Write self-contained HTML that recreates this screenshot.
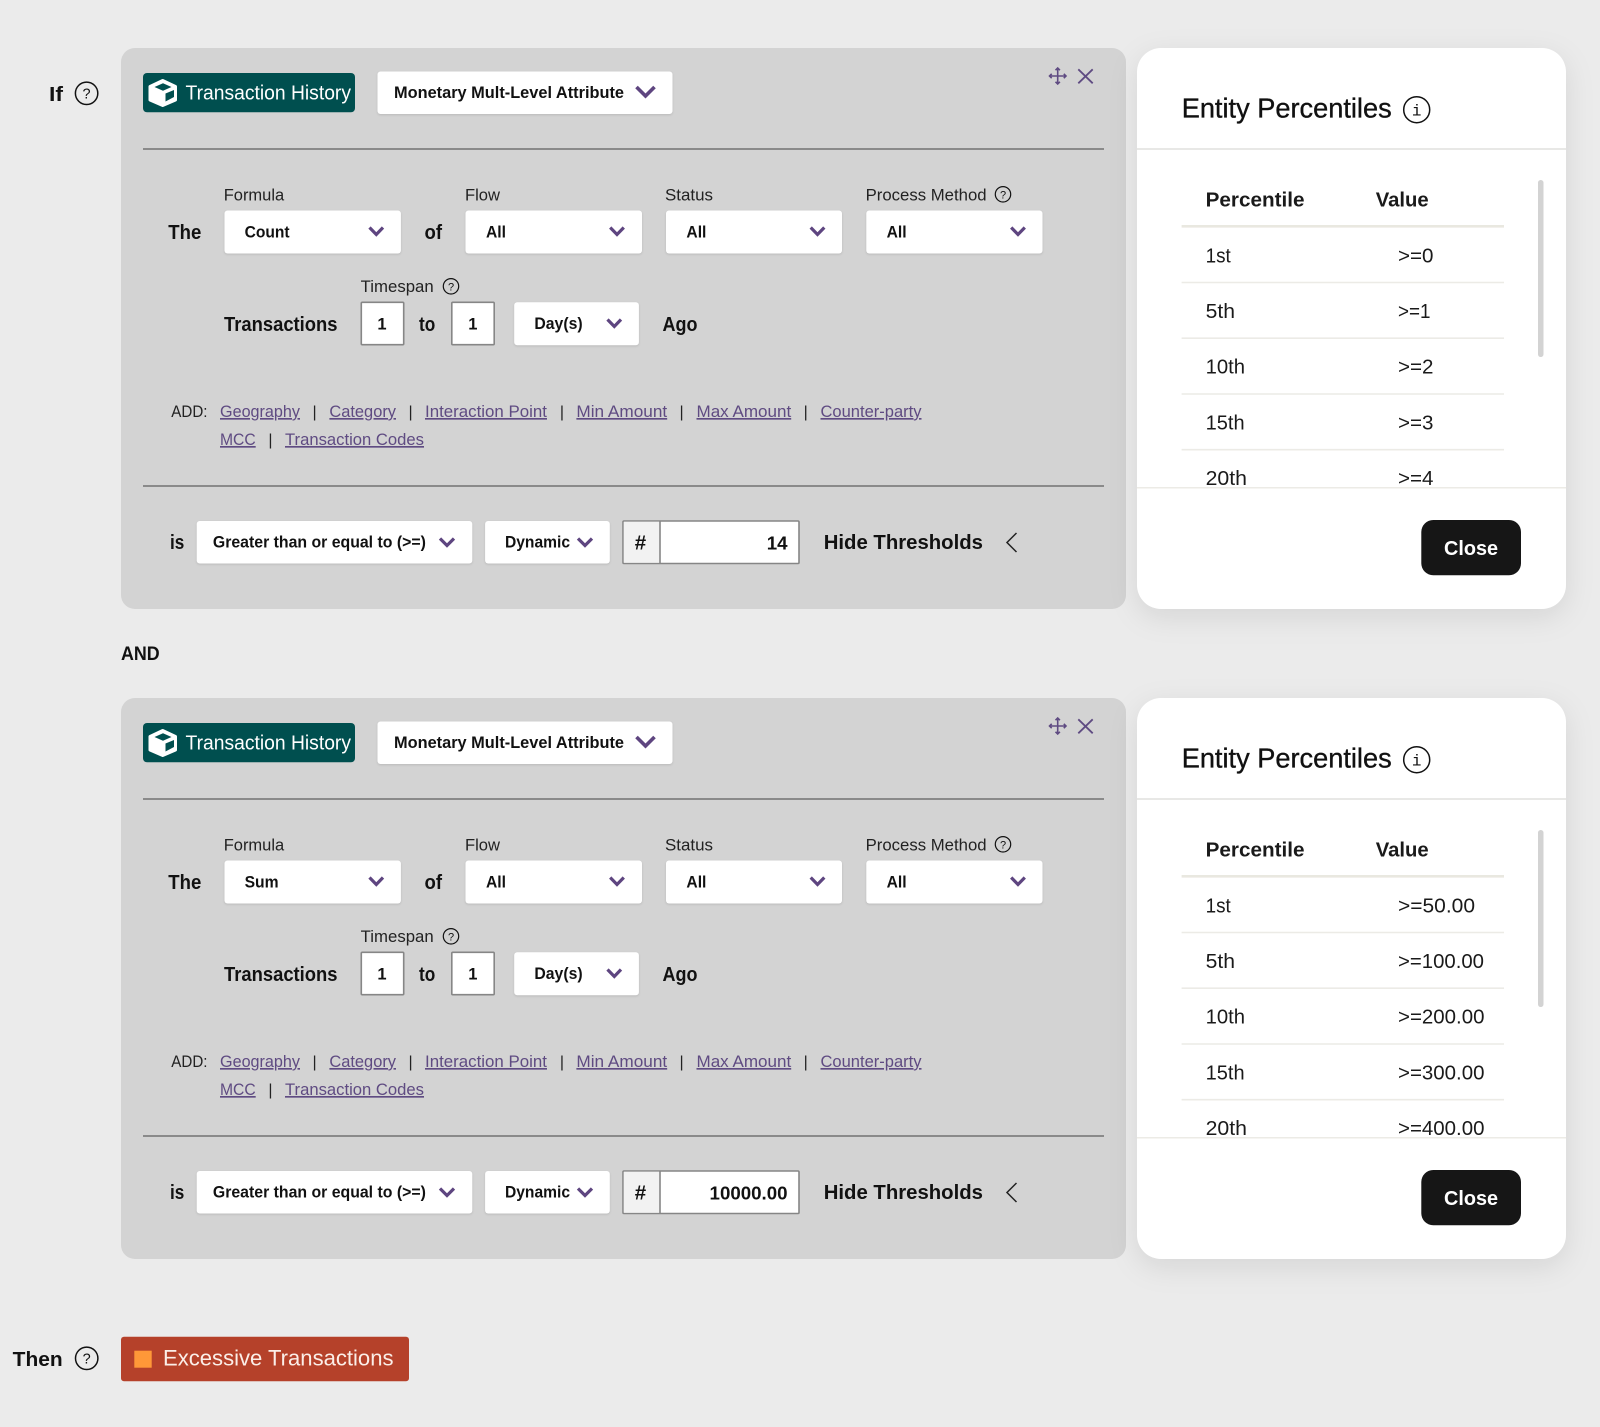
<!DOCTYPE html>
<html lang="en">
<head>
<meta charset="utf-8">
<title>Rule Builder</title>
<style>
html,body{margin:0;padding:0;background:#ebebeb;}
svg{display:block;}
text{font-family:"Liberation Sans",sans-serif;fill:#111;}
.b20{font-size:20.5px;font-weight:700;}
.b16{font-size:16.5px;font-weight:700;}
.r16{font-size:16.5px;fill:#222;}
.lnk{font-size:16.5px;fill:#5f4b82;text-decoration:underline;}
.sep{font-size:16px;fill:#222;}
.th{font-size:20.5px;font-weight:700;fill:#1a1a1a;}
.td{font-size:20.5px;fill:#1a1a1a;}
.dd{fill:#fff;filter:drop-shadow(0 1px 1px rgba(0,0,0,.12));}
.chev{fill:none;stroke:#5e4580;stroke-width:3.2;}
.hr{stroke:#8a8a8a;stroke-width:2;}
.rl{stroke:#ecebe6;stroke-width:1.6;}
.q{fill:none;stroke:#111;stroke-width:1.5;}
.side{fill:#fff;filter:drop-shadow(0 8px 14px rgba(0,0,0,.09));}
.inp{fill:#fff;stroke:#868686;stroke-width:1.6;}
.ttl{font-size:28px;fill:#111;stroke:#111;stroke-width:.35;}
</style>
</head>
<body>
<svg xmlns="http://www.w3.org/2000/svg" width="1600" height="1427" viewBox="0 0 1600 1427">
<rect width="1600" height="1427" fill="#ebebeb"/>

<text class="b20" x="49" y="101" textLength="14" lengthAdjust="spacingAndGlyphs">If</text>
<circle class="q" cx="86.6" cy="93.3" r="11.2"/>
<text x="86.6" y="98.7" text-anchor="middle" style="font-size:14.5px">?</text>

<g>
<rect x="121" y="48" width="1005" height="561" rx="14" fill="#d3d3d3"/>
<rect x="143" y="73" width="212" height="39.3" rx="4" fill="#004f4f"/>
<path d="M162.7 80.5L175.5 86.5V100L162.7 105.5L150 100V86.5Z" fill="#fff" stroke="#fff" stroke-width="3" stroke-linejoin="round"/>
<path d="M154.5 87L163 83.2L171.5 87L163 90.8Z" fill="#004f4f"/>
<path d="M165.5 93.5L174 90V97L165.5 101.5Z" fill="#004f4f"/>
<text x="185.5" y="99.5" textLength="165.5" lengthAdjust="spacingAndGlyphs" style="font-size:20.5px;fill:#fff">Transaction History</text>
<rect class="dd" x="377.5" y="71.5" width="295" height="42.5" rx="3"/>
<text class="b16" x="394" y="98" textLength="230" lengthAdjust="spacingAndGlyphs">Monetary Mult-Level Attribute</text>
<path class="chev" style="stroke-width:3.6" d="M636.5 87L645.5 96L654.5 87"/>
<path d="M1049.5 76H1066M1057.7 68V84M1055.5 70.2L1057.7 68L1059.9 70.2M1055.5 81.8L1057.7 84L1059.9 81.8M1051.7 73.8L1049.5 76L1051.7 78.2M1063.8 73.8L1066 76L1063.8 78.2" fill="none" stroke="#5f4b82" stroke-width="1.6"/>
<path d="M1078.3 69.3L1092.7 83.3M1092.7 69.3L1078.3 83.3" fill="none" stroke="#5f4b82" stroke-width="1.8"/>
<line class="hr" x1="143" y1="149" x2="1104" y2="149"/>

<text class="r16" x="223.7" y="200.5" textLength="60.5" lengthAdjust="spacingAndGlyphs">Formula</text>
<text class="r16" x="465" y="200.5" textLength="35" lengthAdjust="spacingAndGlyphs">Flow</text>
<text class="r16" x="665" y="200.5" textLength="48" lengthAdjust="spacingAndGlyphs">Status</text>
<text class="r16" x="865.6" y="200.5" textLength="121" lengthAdjust="spacingAndGlyphs">Process Method</text>
<circle class="q" style="stroke-width:1.2" cx="1003" cy="194.3" r="7.7"/>
<text x="1003" y="198.3" text-anchor="middle" style="font-size:11px">?</text>

<text class="b20" x="168.3" y="239" textLength="33" lengthAdjust="spacingAndGlyphs">The</text>
<rect class="dd" x="224.5" y="210.5" width="176.4" height="43" rx="3"/>
<text class="b16" x="244.6" y="237.5" textLength="45" lengthAdjust="spacingAndGlyphs">Count</text>
<path class="chev" d="M369.5 227.5L376.3 234.5L383 227.5"/>
<text class="b20" x="424.5" y="239" textLength="17.5" lengthAdjust="spacingAndGlyphs">of</text>
<rect class="dd" x="465.5" y="210.5" width="176.5" height="43" rx="3"/>
<text class="b16" x="486" y="237.5" textLength="20" lengthAdjust="spacingAndGlyphs">All</text>
<path class="chev" d="M610.2 227.5L617 234.5L623.8 227.5"/>
<rect class="dd" x="666" y="210.5" width="176" height="43" rx="3"/>
<text class="b16" x="686.4" y="237.5" textLength="20" lengthAdjust="spacingAndGlyphs">All</text>
<path class="chev" d="M810.7 227.5L817.5 234.5L824.3 227.5"/>
<rect class="dd" x="866.3" y="210.5" width="176.2" height="43" rx="3"/>
<text class="b16" x="886.6" y="237.5" textLength="20" lengthAdjust="spacingAndGlyphs">All</text>
<path class="chev" d="M1011.2 227.5L1018 234.5L1024.8 227.5"/>

<text class="r16" x="360.7" y="292" textLength="73" lengthAdjust="spacingAndGlyphs">Timespan</text>
<circle class="q" style="stroke-width:1.2" cx="451" cy="286.3" r="7.7"/>
<text x="451" y="290.3" text-anchor="middle" style="font-size:11px">?</text>
<text class="b20" x="224" y="331" textLength="113.5" lengthAdjust="spacingAndGlyphs">Transactions</text>
<rect class="inp" x="361.3" y="302.3" width="42.4" height="42.4" rx="1"/>
<text class="b16" x="382" y="329.5" text-anchor="middle">1</text>
<text class="b20" x="419" y="331" textLength="16.3" lengthAdjust="spacingAndGlyphs">to</text>
<rect class="inp" x="451.8" y="302.3" width="42.4" height="42.4" rx="1"/>
<text class="b16" x="472.8" y="329.5" text-anchor="middle">1</text>
<rect class="dd" x="514.2" y="302.2" width="124.7" height="43" rx="3"/>
<text class="b16" x="534.4" y="329" textLength="48.2" lengthAdjust="spacingAndGlyphs">Day(s)</text>
<path class="chev" d="M607.5 319.5L614.3 326.5L621 319.5"/>
<text class="b20" x="662.5" y="331" textLength="35" lengthAdjust="spacingAndGlyphs">Ago</text>

<text class="r16" x="171.3" y="417" textLength="36.2" lengthAdjust="spacingAndGlyphs">ADD:</text>
<text class="lnk" x="220" y="417" textLength="80" lengthAdjust="spacingAndGlyphs">Geography</text>
<text class="sep" x="314.6" y="417" text-anchor="middle">|</text>
<text class="lnk" x="329.4" y="417" textLength="66.6" lengthAdjust="spacingAndGlyphs">Category</text>
<text class="sep" x="410.6" y="417" text-anchor="middle">|</text>
<text class="lnk" x="425" y="417" textLength="122" lengthAdjust="spacingAndGlyphs">Interaction Point</text>
<text class="sep" x="562" y="417" text-anchor="middle">|</text>
<text class="lnk" x="576.4" y="417" textLength="90.8" lengthAdjust="spacingAndGlyphs">Min Amount</text>
<text class="sep" x="681.6" y="417" text-anchor="middle">|</text>
<text class="lnk" x="696.5" y="417" textLength="94.7" lengthAdjust="spacingAndGlyphs">Max Amount</text>
<text class="sep" x="805.7" y="417" text-anchor="middle">|</text>
<text class="lnk" x="820.5" y="417" textLength="101" lengthAdjust="spacingAndGlyphs">Counter-party</text>
<text class="lnk" x="220" y="445" textLength="35.7" lengthAdjust="spacingAndGlyphs">MCC</text>
<text class="sep" x="270.4" y="445" text-anchor="middle">|</text>
<text class="lnk" x="285" y="445" textLength="139" lengthAdjust="spacingAndGlyphs">Transaction Codes</text>
<line class="hr" x1="143" y1="486" x2="1104" y2="486"/>

<text class="b20" x="170" y="549" textLength="14.3" lengthAdjust="spacingAndGlyphs">is</text>
<rect class="dd" x="196.7" y="521" width="275.6" height="42.5" rx="3"/>
<text class="b16" x="212.9" y="547.5" textLength="213" lengthAdjust="spacingAndGlyphs">Greater than or equal to (&gt;=)</text>
<path class="chev" d="M440 538.5L447 545.5L454 538.5"/>
<rect class="dd" x="485.1" y="521" width="124.7" height="42.5" rx="3"/>
<text class="b16" x="505" y="547.5" textLength="65" lengthAdjust="spacingAndGlyphs">Dynamic</text>
<path class="chev" d="M578 538.5L585 545.5L592 538.5"/>
<rect class="inp" x="623" y="521" width="176" height="42.5" rx="1"/>
<rect x="623.8" y="521.8" width="36.2" height="40.9" fill="#f2f2f2"/>
<line x1="660" y1="521" x2="660" y2="563.5" stroke="#868686" stroke-width="1.6"/>
<text class="b20" x="640.5" y="549.5" text-anchor="middle">#</text>
<text x="787.5" y="549.5" text-anchor="end" style="font-size:18.7px;font-weight:700">14</text>
<text class="b20" x="823.7" y="549" textLength="159.3" lengthAdjust="spacingAndGlyphs">Hide Thresholds</text>
<path d="M1016.5 533L1007 542.5L1016.5 552" fill="none" stroke="#222" stroke-width="1.5"/>

<rect class="side" x="1137" y="48" width="429" height="561" rx="24"/>
<text class="ttl" x="1181.7" y="117.5" textLength="210" lengthAdjust="spacingAndGlyphs">Entity Percentiles</text>
<circle class="q" cx="1416.7" cy="109.7" r="13"/>
<text x="1416.7" y="115.5" text-anchor="middle" style="font-family:'Liberation Mono',monospace;font-size:16px">i</text>
<line x1="1137" y1="149" x2="1566" y2="149" stroke="#e8e8e6" stroke-width="2"/>
<rect x="1538" y="180" width="5.5" height="177" rx="2.7" fill="#d3d3d3"/>
<text class="th" x="1205.6" y="206.5" textLength="98.9" lengthAdjust="spacingAndGlyphs">Percentile</text>
<text class="th" x="1375.7" y="206.5" textLength="53" lengthAdjust="spacingAndGlyphs">Value</text>
<line x1="1181.6" y1="226.3" x2="1504" y2="226.3" stroke="#e9e8e0" stroke-width="2.6"/>
<text class="td" x="1205.6" y="262.5" textLength="25.2" lengthAdjust="spacingAndGlyphs">1st</text>
<text class="td" x="1398" y="262.5" textLength="35.5" lengthAdjust="spacingAndGlyphs">&gt;=0</text>
<line class="rl" x1="1181.6" y1="282.5" x2="1504" y2="282.5"/>
<text class="td" x="1205.6" y="318" textLength="29.4" lengthAdjust="spacingAndGlyphs">5th</text>
<text class="td" x="1398" y="318" textLength="32.5" lengthAdjust="spacingAndGlyphs">&gt;=1</text>
<line class="rl" x1="1181.6" y1="338.2" x2="1504" y2="338.2"/>
<text class="td" x="1205.6" y="373.6" textLength="39.5" lengthAdjust="spacingAndGlyphs">10th</text>
<text class="td" x="1398" y="373.6" textLength="35.5" lengthAdjust="spacingAndGlyphs">&gt;=2</text>
<line class="rl" x1="1181.6" y1="394" x2="1504" y2="394"/>
<text class="td" x="1205.6" y="429.3" textLength="39" lengthAdjust="spacingAndGlyphs">15th</text>
<text class="td" x="1398" y="429.3" textLength="35.5" lengthAdjust="spacingAndGlyphs">&gt;=3</text>
<line class="rl" x1="1181.6" y1="449.7" x2="1504" y2="449.7"/>
<text class="td" x="1205.6" y="485" textLength="41.4" lengthAdjust="spacingAndGlyphs">20th</text>
<text class="td" x="1398" y="485" textLength="35.5" lengthAdjust="spacingAndGlyphs">&gt;=4</text>
<rect x="1137.5" y="487" width="428" height="20" fill="#fff"/>
<line x1="1137" y1="487.7" x2="1566" y2="487.7" stroke="#ecebe6" stroke-width="1.5"/>
<rect x="1421.3" y="520" width="99.7" height="55.3" rx="12" fill="#161616"/>
<text class="b20" x="1444" y="555" textLength="54" lengthAdjust="spacingAndGlyphs" style="fill:#fff">Close</text>
</g>

<text x="121" y="660" textLength="38.7" lengthAdjust="spacingAndGlyphs" style="font-size:19.5px;font-weight:700">AND</text>

<g transform="translate(0,650)">
<rect x="121" y="48" width="1005" height="561" rx="14" fill="#d3d3d3"/>
<rect x="143" y="73" width="212" height="39.3" rx="4" fill="#004f4f"/>
<path d="M162.7 80.5L175.5 86.5V100L162.7 105.5L150 100V86.5Z" fill="#fff" stroke="#fff" stroke-width="3" stroke-linejoin="round"/>
<path d="M154.5 87L163 83.2L171.5 87L163 90.8Z" fill="#004f4f"/>
<path d="M165.5 93.5L174 90V97L165.5 101.5Z" fill="#004f4f"/>
<text x="185.5" y="99.5" textLength="165.5" lengthAdjust="spacingAndGlyphs" style="font-size:20.5px;fill:#fff">Transaction History</text>
<rect class="dd" x="377.5" y="71.5" width="295" height="42.5" rx="3"/>
<text class="b16" x="394" y="98" textLength="230" lengthAdjust="spacingAndGlyphs">Monetary Mult-Level Attribute</text>
<path class="chev" style="stroke-width:3.6" d="M636.5 87L645.5 96L654.5 87"/>
<path d="M1049.5 76H1066M1057.7 68V84M1055.5 70.2L1057.7 68L1059.9 70.2M1055.5 81.8L1057.7 84L1059.9 81.8M1051.7 73.8L1049.5 76L1051.7 78.2M1063.8 73.8L1066 76L1063.8 78.2" fill="none" stroke="#5f4b82" stroke-width="1.6"/>
<path d="M1078.3 69.3L1092.7 83.3M1092.7 69.3L1078.3 83.3" fill="none" stroke="#5f4b82" stroke-width="1.8"/>
<line class="hr" x1="143" y1="149" x2="1104" y2="149"/>

<text class="r16" x="223.7" y="200.5" textLength="60.5" lengthAdjust="spacingAndGlyphs">Formula</text>
<text class="r16" x="465" y="200.5" textLength="35" lengthAdjust="spacingAndGlyphs">Flow</text>
<text class="r16" x="665" y="200.5" textLength="48" lengthAdjust="spacingAndGlyphs">Status</text>
<text class="r16" x="865.6" y="200.5" textLength="121" lengthAdjust="spacingAndGlyphs">Process Method</text>
<circle class="q" style="stroke-width:1.2" cx="1003" cy="194.3" r="7.7"/>
<text x="1003" y="198.3" text-anchor="middle" style="font-size:11px">?</text>

<text class="b20" x="168.3" y="239" textLength="33" lengthAdjust="spacingAndGlyphs">The</text>
<rect class="dd" x="224.5" y="210.5" width="176.4" height="43" rx="3"/>
<text class="b16" x="244.6" y="237.5" textLength="34" lengthAdjust="spacingAndGlyphs">Sum</text>
<path class="chev" d="M369.5 227.5L376.3 234.5L383 227.5"/>
<text class="b20" x="424.5" y="239" textLength="17.5" lengthAdjust="spacingAndGlyphs">of</text>
<rect class="dd" x="465.5" y="210.5" width="176.5" height="43" rx="3"/>
<text class="b16" x="486" y="237.5" textLength="20" lengthAdjust="spacingAndGlyphs">All</text>
<path class="chev" d="M610.2 227.5L617 234.5L623.8 227.5"/>
<rect class="dd" x="666" y="210.5" width="176" height="43" rx="3"/>
<text class="b16" x="686.4" y="237.5" textLength="20" lengthAdjust="spacingAndGlyphs">All</text>
<path class="chev" d="M810.7 227.5L817.5 234.5L824.3 227.5"/>
<rect class="dd" x="866.3" y="210.5" width="176.2" height="43" rx="3"/>
<text class="b16" x="886.6" y="237.5" textLength="20" lengthAdjust="spacingAndGlyphs">All</text>
<path class="chev" d="M1011.2 227.5L1018 234.5L1024.8 227.5"/>

<text class="r16" x="360.7" y="292" textLength="73" lengthAdjust="spacingAndGlyphs">Timespan</text>
<circle class="q" style="stroke-width:1.2" cx="451" cy="286.3" r="7.7"/>
<text x="451" y="290.3" text-anchor="middle" style="font-size:11px">?</text>
<text class="b20" x="224" y="331" textLength="113.5" lengthAdjust="spacingAndGlyphs">Transactions</text>
<rect class="inp" x="361.3" y="302.3" width="42.4" height="42.4" rx="1"/>
<text class="b16" x="382" y="329.5" text-anchor="middle">1</text>
<text class="b20" x="419" y="331" textLength="16.3" lengthAdjust="spacingAndGlyphs">to</text>
<rect class="inp" x="451.8" y="302.3" width="42.4" height="42.4" rx="1"/>
<text class="b16" x="472.8" y="329.5" text-anchor="middle">1</text>
<rect class="dd" x="514.2" y="302.2" width="124.7" height="43" rx="3"/>
<text class="b16" x="534.4" y="329" textLength="48.2" lengthAdjust="spacingAndGlyphs">Day(s)</text>
<path class="chev" d="M607.5 319.5L614.3 326.5L621 319.5"/>
<text class="b20" x="662.5" y="331" textLength="35" lengthAdjust="spacingAndGlyphs">Ago</text>

<text class="r16" x="171.3" y="417" textLength="36.2" lengthAdjust="spacingAndGlyphs">ADD:</text>
<text class="lnk" x="220" y="417" textLength="80" lengthAdjust="spacingAndGlyphs">Geography</text>
<text class="sep" x="314.6" y="417" text-anchor="middle">|</text>
<text class="lnk" x="329.4" y="417" textLength="66.6" lengthAdjust="spacingAndGlyphs">Category</text>
<text class="sep" x="410.6" y="417" text-anchor="middle">|</text>
<text class="lnk" x="425" y="417" textLength="122" lengthAdjust="spacingAndGlyphs">Interaction Point</text>
<text class="sep" x="562" y="417" text-anchor="middle">|</text>
<text class="lnk" x="576.4" y="417" textLength="90.8" lengthAdjust="spacingAndGlyphs">Min Amount</text>
<text class="sep" x="681.6" y="417" text-anchor="middle">|</text>
<text class="lnk" x="696.5" y="417" textLength="94.7" lengthAdjust="spacingAndGlyphs">Max Amount</text>
<text class="sep" x="805.7" y="417" text-anchor="middle">|</text>
<text class="lnk" x="820.5" y="417" textLength="101" lengthAdjust="spacingAndGlyphs">Counter-party</text>
<text class="lnk" x="220" y="445" textLength="35.7" lengthAdjust="spacingAndGlyphs">MCC</text>
<text class="sep" x="270.4" y="445" text-anchor="middle">|</text>
<text class="lnk" x="285" y="445" textLength="139" lengthAdjust="spacingAndGlyphs">Transaction Codes</text>
<line class="hr" x1="143" y1="486" x2="1104" y2="486"/>

<text class="b20" x="170" y="549" textLength="14.3" lengthAdjust="spacingAndGlyphs">is</text>
<rect class="dd" x="196.7" y="521" width="275.6" height="42.5" rx="3"/>
<text class="b16" x="212.9" y="547.5" textLength="213" lengthAdjust="spacingAndGlyphs">Greater than or equal to (&gt;=)</text>
<path class="chev" d="M440 538.5L447 545.5L454 538.5"/>
<rect class="dd" x="485.1" y="521" width="124.7" height="42.5" rx="3"/>
<text class="b16" x="505" y="547.5" textLength="65" lengthAdjust="spacingAndGlyphs">Dynamic</text>
<path class="chev" d="M578 538.5L585 545.5L592 538.5"/>
<rect class="inp" x="623" y="521" width="176" height="42.5" rx="1"/>
<rect x="623.8" y="521.8" width="36.2" height="40.9" fill="#f2f2f2"/>
<line x1="660" y1="521" x2="660" y2="563.5" stroke="#868686" stroke-width="1.6"/>
<text class="b20" x="640.5" y="549.5" text-anchor="middle">#</text>
<text x="787.5" y="549.5" text-anchor="end" style="font-size:18.7px;font-weight:700">10000.00</text>
<text class="b20" x="823.7" y="549" textLength="159.3" lengthAdjust="spacingAndGlyphs">Hide Thresholds</text>
<path d="M1016.5 533L1007 542.5L1016.5 552" fill="none" stroke="#222" stroke-width="1.5"/>

<rect class="side" x="1137" y="48" width="429" height="561" rx="24"/>
<text class="ttl" x="1181.7" y="117.5" textLength="210" lengthAdjust="spacingAndGlyphs">Entity Percentiles</text>
<circle class="q" cx="1416.7" cy="109.7" r="13"/>
<text x="1416.7" y="115.5" text-anchor="middle" style="font-family:'Liberation Mono',monospace;font-size:16px">i</text>
<line x1="1137" y1="149" x2="1566" y2="149" stroke="#e8e8e6" stroke-width="2"/>
<rect x="1538" y="180" width="5.5" height="177" rx="2.7" fill="#d3d3d3"/>
<text class="th" x="1205.6" y="206.5" textLength="98.9" lengthAdjust="spacingAndGlyphs">Percentile</text>
<text class="th" x="1375.7" y="206.5" textLength="53" lengthAdjust="spacingAndGlyphs">Value</text>
<line x1="1181.6" y1="226.3" x2="1504" y2="226.3" stroke="#e9e8e0" stroke-width="2.6"/>
<text class="td" x="1205.6" y="262.5" textLength="25.2" lengthAdjust="spacingAndGlyphs">1st</text>
<text class="td" x="1398" y="262.5" textLength="77" lengthAdjust="spacingAndGlyphs">&gt;=50.00</text>
<line class="rl" x1="1181.6" y1="282.5" x2="1504" y2="282.5"/>
<text class="td" x="1205.6" y="318" textLength="29.4" lengthAdjust="spacingAndGlyphs">5th</text>
<text class="td" x="1398" y="318" textLength="86" lengthAdjust="spacingAndGlyphs">&gt;=100.00</text>
<line class="rl" x1="1181.6" y1="338.2" x2="1504" y2="338.2"/>
<text class="td" x="1205.6" y="373.6" textLength="39.5" lengthAdjust="spacingAndGlyphs">10th</text>
<text class="td" x="1398" y="373.6" textLength="86.5" lengthAdjust="spacingAndGlyphs">&gt;=200.00</text>
<line class="rl" x1="1181.6" y1="394" x2="1504" y2="394"/>
<text class="td" x="1205.6" y="429.3" textLength="39" lengthAdjust="spacingAndGlyphs">15th</text>
<text class="td" x="1398" y="429.3" textLength="86.5" lengthAdjust="spacingAndGlyphs">&gt;=300.00</text>
<line class="rl" x1="1181.6" y1="449.7" x2="1504" y2="449.7"/>
<text class="td" x="1205.6" y="485" textLength="41.4" lengthAdjust="spacingAndGlyphs">20th</text>
<text class="td" x="1398" y="485" textLength="86.5" lengthAdjust="spacingAndGlyphs">&gt;=400.00</text>
<rect x="1137.5" y="487" width="428" height="20" fill="#fff"/>
<line x1="1137" y1="487.7" x2="1566" y2="487.7" stroke="#ecebe6" stroke-width="1.5"/>
<rect x="1421.3" y="520" width="99.7" height="55.3" rx="12" fill="#161616"/>
<text class="b20" x="1444" y="555" textLength="54" lengthAdjust="spacingAndGlyphs" style="fill:#fff">Close</text>
</g>

<text class="b20" x="12.7" y="1366" textLength="50" lengthAdjust="spacingAndGlyphs">Then</text>
<circle class="q" cx="86.7" cy="1358.3" r="11.2"/>
<text x="86.7" y="1363.7" text-anchor="middle" style="font-size:14.5px">?</text>
<rect x="121" y="1336.7" width="288" height="44.6" rx="3" fill="#b5412a"/>
<rect x="134.3" y="1350.7" width="17.4" height="17" fill="#ff9838"/>
<text x="163" y="1365.7" textLength="230.5" lengthAdjust="spacingAndGlyphs" style="font-size:22.5px;fill:#fbeee8">Excessive Transactions</text>
</svg>
</body>
</html>
